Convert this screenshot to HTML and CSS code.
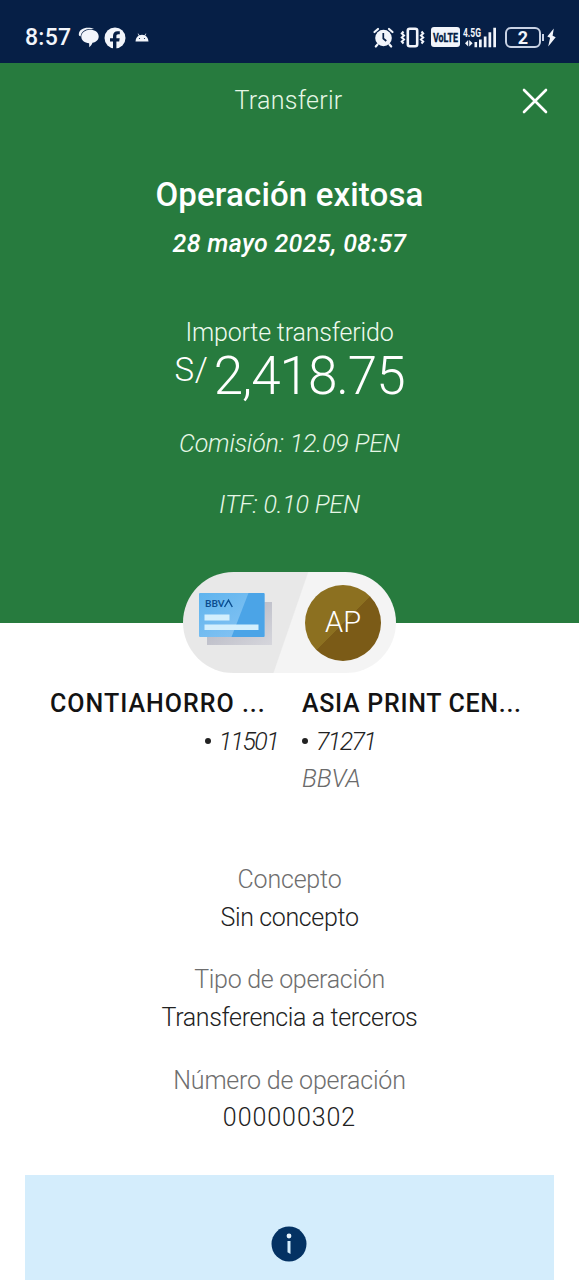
FILE: index.html
```html
<!DOCTYPE html>
<html lang="es">
<head>
<meta charset="utf-8">
<title>Transferir</title>
<link rel="stylesheet" href="styles.css">
</head>
<body>
<header class="status">
  <div class="status-left">
    <span class="clock">8:57</span>
    <svg class="ic-chat" width="22" height="22" viewBox="0 0 22 22"><path d="M.8 7.500C1 3 5 .8 10 .8c2.500 0 4.500.4 6 1.200L10 2.300C6 3 3.300 5 2.600 9.500 1.300 9 .8 8.500.8 7.500z" fill="#f2f5fb"/><path d="M12 2.800c5 0 8.700 2.600 8.700 6.600 0 3-2.300 5.600-6.200 6.400-.6 1.600-1.800 3.300-3.300 4.400.1-1.500 0-2.800-.1-4C6.600 16 3.300 13.500 3.300 9.600 3.300 5.800 7.200 2.800 12 2.800z" fill="#f2f5fb"/></svg>
    <svg class="ic-fb" width="22" height="22" viewBox="0 0 22 22"><circle cx="11" cy="11" r="10.500" fill="#f2f5fb"/><path d="M9 22v-7.500H6v-3.300h3V9c0-3.200 1.700-4.800 4.500-4.800h2.300v3h-1.500c-1.400 0-1.900.7-1.900 1.900v2.100h3.300l-.5 3.300h-2.800V22z" fill="#061f46"/></svg>
    <svg class="ic-droid" width="14" height="9" viewBox="0 0 14 9"><path d="M.5 8.500C.8 5.500 2 3.500 3.800 2.600L2.600.8l.6-.4 1.300 1.900a7 7 0 0 1 5 0L10.800.4l.6.4-1.200 1.800c1.800.9 3 2.900 3.300 5.900z" fill="#f2f5fb"/><circle cx="4.500" cy="5.500" r=".6" fill="#061f46"/><circle cx="9.500" cy="5.500" r=".6" fill="#061f46"/></svg>
  </div>
  <div class="status-right">
    <svg width="21" height="21" viewBox="0 0 21 21"><circle cx="10.500" cy="11" r="8.300" fill="#f2f5fb"/><path d="M1.500 5 5 2M19.500 5 16 2M4.500 17.500 2.800 19.500M16.500 17.500l1.700 2" stroke="#f2f5fb" stroke-width="2.200" stroke-linecap="round"/><path d="M10.300 6v5.500l3 2.500" fill="none" stroke="#061f46" stroke-width="1.700"/></svg>
    <svg class="ic-vib" width="25" height="21" viewBox="0 0 25 21"><rect x="7.800" y="1.700" width="9.400" height="17.600" rx="2" fill="none" stroke="#f2f5fb" stroke-width="2.600"/><path d="M3.500 4.500 1.800 6.500l2.200 2-2.200 2L4 12.500l-2.200 2 1.700 2M21.500 4.500l1.700 2-2.200 2 2.200 2-2.200 2 2.200 2-1.700 2" fill="none" stroke="#f2f5fb" stroke-width="2"/></svg>
    <svg class="volte" width="29" height="20" viewBox="0 0 29 20"><rect width="29" height="20" rx="3" fill="#f2f5fb"/><text x="2" y="14.600" textLength="25" lengthAdjust="spacingAndGlyphs">VoLTE</text></svg>
    <svg class="signal" width="34" height="21" viewBox="0 0 34 21"><text x="0" y="10" textLength="18" lengthAdjust="spacingAndGlyphs">4.5G</text><path d="M2 16.300 5.200 13v6.600zM9.600 16.300 6.200 13v6.600zM11.500 15h2.600v5.200h-2.600zM16 12.500h2.700v7.700H16zM20.800 9.500h2.700v10.700h-2.700zM25.500 5.300h2.700v14.900h-2.700zM30.300 .8H33v19.400h-2.700z"/></svg>
    <span class="battery">2</span>
    <svg class="ic-bolt" width="9" height="21" viewBox="0 0 9 21"><path d="M6.800 1.500.3 9.500l2.800 1.200L1.200 19.500 8.700 10.200 5.600 8.800z" fill="#f2f5fb"/></svg>
  </div>
</header>

<main>
  <section class="hero">
    <div class="titlebar">
      <h1>Transferir</h1>
      <svg class="close" width="28" height="28" viewBox="0 0 28 28"><path d="M3 3 25 25M25 3 3 25" stroke="#fff" stroke-width="2.600" stroke-linecap="round"/></svg>
    </div>
    <h2>Operación exitosa</h2>
    <p class="date">28 mayo 2025, 08:57</p>
    <p class="caption">Importe transferido</p>
    <p class="amount"><span class="currency">S/</span><span class="figure">2,418.75</span></p>
    <p class="fee">Comisión: 12.09 PEN</p>
    <p class="itf">ITF: 0.10 PEN</p>
  </section>

  <div class="pill">
    <svg class="card" width="76" height="54" viewBox="0 0 76 54">
      <defs><linearGradient id="sh" x1="0" y1="0" x2="1" y2="1"><stop offset="0" stop-color="#aeb0bd"/><stop offset="1" stop-color="#d6d6dc"/></linearGradient>
      <linearGradient id="cd" x1="0" y1="0" x2="1" y2="1"><stop offset="0" stop-color="#5fb4ee"/><stop offset=".75" stop-color="#80c1f2"/></linearGradient></defs>
      <path d="M9 9h65v43H9z" fill="url(#sh)"/>
      <rect x="1" y="0" width="65.500" height="44" rx="1" fill="url(#cd)"/>
      <path d="M50.500 0H65.500q1 0 1 1v42q0 1-1 1H33.500z" fill="#4ba4e7"/>
      <path d="M6.500 21.500h25V27.500h-25zM6.500 31.500h54V37h-54z" fill="#d3effd"/>
      <text class="brand" x="7" y="14" textLength="19.500" lengthAdjust="spacingAndGlyphs">BBV</text>
      <path d="M26.500 14 30.500 7.200 34.300 14" fill="none" stroke="#0b4d8f" stroke-width="1.400"/>
    </svg>
    <div class="avatar">AP</div>
  </div>

  <section class="parties">
    <div class="from">
      <p class="name n1">CONTIAHORRO ...</p>
      <p class="acct"><i></i>11501</p>
    </div>
    <div class="to">
      <p class="name n2">ASIA PRINT CEN...</p>
      <p class="acct"><i></i>71271</p>
      <p class="bank">BBVA</p>
    </div>
  </section>

  <dl class="details">
    <div><dt class="d1">Concepto</dt><dd class="v1">Sin concepto</dd></div>
    <div><dt class="d2">Tipo de operación</dt><dd class="v2">Transferencia a terceros</dd></div>
    <div><dt class="d3">Número de operación</dt><dd class="v3">000000302</dd></div>
  </dl>

  <aside class="notice">
    <svg width="36" height="36" viewBox="0 0 36 36"><circle cx="18" cy="18" r="17.500" fill="#043263"/><circle cx="18" cy="10" r="2.400" fill="#e8f5fd"/><path d="M16.500 15h3v13l-3-1.800z" fill="#d4edfc"/></svg>
  </aside>
</main>
</body>
</html>
```
FILE: styles.css
```css
* { box-sizing: border-box; }
body {
  margin: 0;
  width: 579px;
  height: 1280px;
  overflow: hidden;
  background: #fff;
  color: #222;
  font: 300 25px/37.5px Roboto, "Liberation Sans", sans-serif;
}
h1, h2, p, dl, dt, dd { margin: 0; font-weight: inherit; font-size: inherit; white-space: nowrap; }

.status {
  height: 63px;
  padding: 12px 23px 0 25px;
  background: #061f46;
  color: #f2f5fb;
  display: flex;
  justify-content: space-between;
  align-items: center;
}
.status-left, .status-right { display: flex; align-items: center; }
.status-right { margin-top: -1px; }
.status svg { overflow: visible; }
.clock { font-size: 23px; font-weight: 500; letter-spacing: .3px; margin-right: 7px; }
.ic-fb { margin-left: 4px; }
.ic-droid { margin-left: 9px; }
.ic-vib { margin-left: 6px; }
.volte { margin-left: 6px; }
.volte text { font: 800 12.500px Roboto, sans-serif; fill: #061f46; stroke: #061f46; stroke-width: .3; }
.signal { margin-left: 3px; fill: #f2f5fb; }
.signal text { font: 700 12px Roboto, sans-serif; }
.battery {
  position: relative;
  width: 36px; height: 21px; margin-left: 8px;
  border: 2px solid #c8d2e4; border-radius: 6px;
  font: 700 18px/18px Roboto, sans-serif;
  text-align: center;
}
.battery::after {
  content: ""; position: absolute; right: -5px; top: 5px;
  width: 2px; height: 7px; background: #c8d2e4;
}
.ic-bolt { margin-left: 6px; }

.hero {
  height: 560px;
  background: #277b3e;
  color: #fff;
  text-align: center;
}
.titlebar {
  height: 75px;
  display: grid;
  grid-template-columns: 58px 1fr 58px;
  align-items: center;
}
.titlebar h1 { grid-column: 2; color: #e6f7e6; letter-spacing: .3px; margin-left: -2px; }
.close { display: block; }
.hero h2 { margin-top: 34px; font-size: 33px; line-height: 46px; font-weight: 500; letter-spacing: .15px; }
.date { margin-top: 7px; font-weight: 500; font-style: italic; letter-spacing: .32px; }
.caption { margin-top: 51px; color: #effaef; letter-spacing: -.18px; }
.amount { display: flex; justify-content: center; align-items: flex-start; height: 50px; }
.currency { font-size: 33px; line-height: 38px; letter-spacing: .8px; margin-right: 5px; }
.figure { font-size: 53px; line-height: 50px; letter-spacing: -1.050px; }
.fee { margin-top: 24px; font-style: italic; color: #e6f7e6; letter-spacing: -.15px; }
.itf { margin-top: 23.500px; font-style: italic; color: #e6f7e6; letter-spacing: -.2px; }

.pill {
  position: relative;
  width: 213px; height: 101px;
  margin: -51px auto 0;
  border-radius: 51px;
  background: linear-gradient(109deg, #e8e8e8 50.300%, #f4f4f4 50.800%);
  display: flex;
  align-items: center;
  justify-content: space-between;
  padding: 0 15px;
}
.card { display: block; margin-top: -5px; }
.brand { font: 700 9.500px Lato, sans-serif; fill: #0b4d8f; }
.avatar {
  width: 76px; height: 76px; border-radius: 50%;
  background: linear-gradient(135deg, #8c7020 50%, #7b5b17 50.500%);
  color: #fff;
  font-size: 29px; line-height: 74px;
  text-align: center;
}

.parties {
  display: grid;
  grid-template-columns: 277px 1fr;
  column-gap: 25px;
  padding-top: 12px;
  height: 188px;
}
.from { display: flex; flex-direction: column; align-items: flex-end; }
.name { font-weight: 500; color: #131313; }
.n1 { width: 227px; letter-spacing: 1px; }
.n2 { letter-spacing: .7px; }
.acct { display: flex; align-items: center; font-style: italic; letter-spacing: -1.600px; }
.from .acct { margin-right: -1px; }
.acct i { width: 6px; height: 6px; margin-right: 8px; border-radius: 50%; background: #222; }
.bank { font-style: italic; color: #6a6a6a; }

.details { text-align: center; }
.details > div { height: 100.300px; }
.details dt { color: #6e6e6e; }
.d1 { letter-spacing: -.2px; }
.v1 { letter-spacing: -.36px; }
.d2 { letter-spacing: -.3px; }
.v2 { letter-spacing: -.38px; }
.d3 { letter-spacing: -.2px; }
.v3 { letter-spacing: .95px; }

.notice {
  margin: 13px 25.500px 0 25px;
  height: 105px;
  padding-top: 51px;
  background: #d4edfc;
  display: flex;
  justify-content: center;
}
```
